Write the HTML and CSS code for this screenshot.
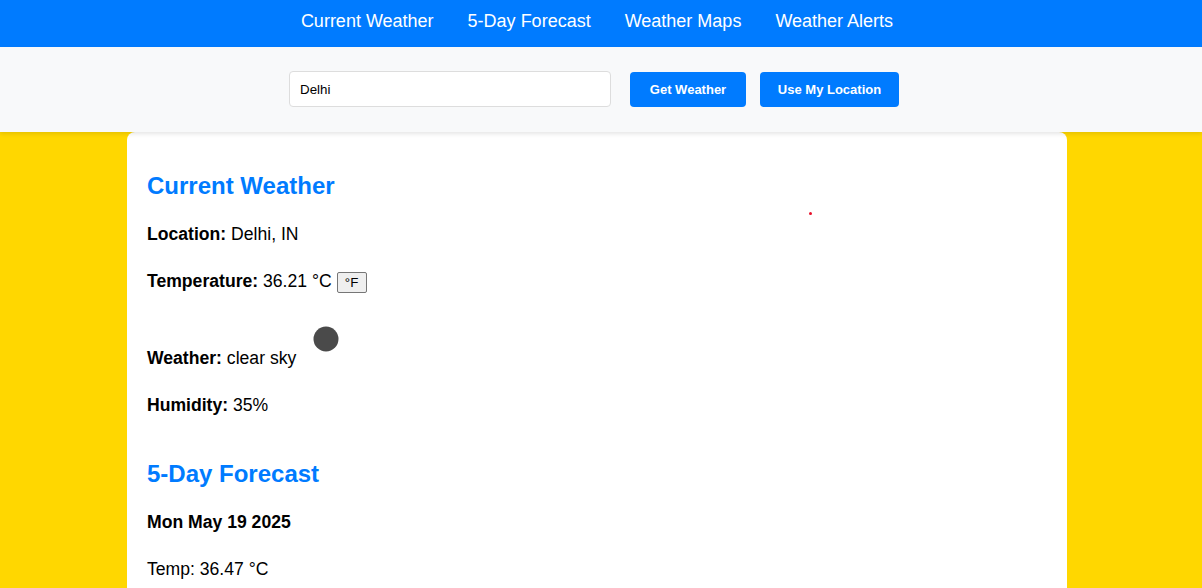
FILE: index.html
```html
<!DOCTYPE html>
<html lang="en">
<head>
<meta charset="utf-8">
<title>Weather App</title>
<link rel="stylesheet" href="styles.css">
</head>
<body>
<nav class="nav">
  <a class="nav-link" href="#current">Current Weather</a>
  <a class="nav-link" href="#forecast">5-Day Forecast</a>
  <a class="nav-link" href="#maps">Weather Maps</a>
  <a class="nav-link" href="#alerts">Weather Alerts</a>
</nav>
<div class="search">
  <input class="search-input" type="text" value="Delhi">
  <button class="btn btn-get">Get Weather</button>
  <button class="btn btn-loc">Use My Location</button>
</div>
<main class="card">
  <span class="marker"></span>
  <section class="current" id="current">
    <h2 class="title">Current Weather</h2>
    <p class="row"><strong>Location:</strong> Delhi, IN</p>
    <p class="row row-temp"><strong>Temperature:</strong> 36.21 °C <button class="unit">°F</button></p>
    <p class="row row-weather"><strong>Weather:</strong> clear sky <svg class="icon" width="50" height="50" viewBox="0 0 50 50"><circle cx="25" cy="25" r="12.5" fill="#4a4a4a"/></svg></p>
    <p class="row"><strong>Humidity:</strong> 35%</p>
  </section>
  <section class="forecast" id="forecast">
    <h2 class="title">5-Day Forecast</h2>
    <p class="row"><strong>Mon May 19 2025</strong></p>
    <p class="row">Temp: 36.47 °C</p>
  </section>
</main>
</body>
</html>
```
FILE: styles.css
```css
html, body {
  margin: 0;
  padding: 0;
}
body {
  background: #ffd700;
  font-family: "Liberation Sans", Arial, sans-serif;
  color: #000;
  min-height: 588px;
}
.nav {
  background: #007bff;
  height: 47px;
  display: flex;
  justify-content: center;
  align-items: center;
  gap: 34px;
  padding-right: 8px;
}
.nav-link {
  color: #fff;
  text-decoration: none;
  font-size: 18px;
  line-height: 21px;
  margin-top: -5px;
}
.search {
  background: #f8f9fa;
  height: 85px;
  display: flex;
  justify-content: center;
  align-items: center;
  padding-right: 14px;
  box-shadow: 0 2px 4px rgba(0, 0, 0, 0.1);
  position: relative;
  z-index: 1;
}
.search-input {
  box-sizing: border-box;
  width: 322px;
  height: 36px;
  border: 1px solid #ddd;
  border-radius: 4px;
  padding: 0 10px;
  font-family: "Liberation Sans", Arial, sans-serif;
  font-size: 13.33px;
  color: #000;
  background: #fff;
  margin-top: -1px;
}
.btn {
  box-sizing: border-box;
  height: 35px;
  border: none;
  border-radius: 4px;
  background: #007bff;
  color: #fff;
  font-family: "Liberation Sans", Arial, sans-serif;
  font-weight: bold;
  font-size: 13px;
  padding: 0;
  white-space: nowrap;
}
.btn-get {
  margin-left: 19px;
  width: 116px;
}
.btn-loc {
  margin-left: 14px;
  width: 139px;
}
.card {
  position: relative;
  width: 940px;
  box-sizing: border-box;
  margin: 0 auto 0 127px;
  background: #fff;
  border-radius: 8px;
  padding: 20px;
  min-height: 500px;
}
.marker {
  position: absolute;
  left: 682px;
  top: 80px;
  width: 3px;
  height: 3px;
  border-radius: 50%;
  background: #e8102a;
}
.title {
  color: #007bff;
  font-size: 24px;
  font-weight: bold;
  margin: 20px 0 21px;
}
.row {
  font-size: 17.6px;
  line-height: 27px;
  margin: 20px 0;
}
.row-temp {
  margin-bottom: 19px;
}
.row-weather {
  margin-top: 0;
}
.forecast .title {
  margin-top: 41px;
}
.unit {
  font-family: "Liberation Sans", Arial, sans-serif;
  font-size: 13.33px;
  padding: 1px 6px;
  border: 1px solid #767676;
  border-radius: 2px;
  background: #efefef;
  color: #000;
  height: 21px;
  width: 30px;
  vertical-align: baseline;
}
.icon {
  vertical-align: baseline;
}
```
